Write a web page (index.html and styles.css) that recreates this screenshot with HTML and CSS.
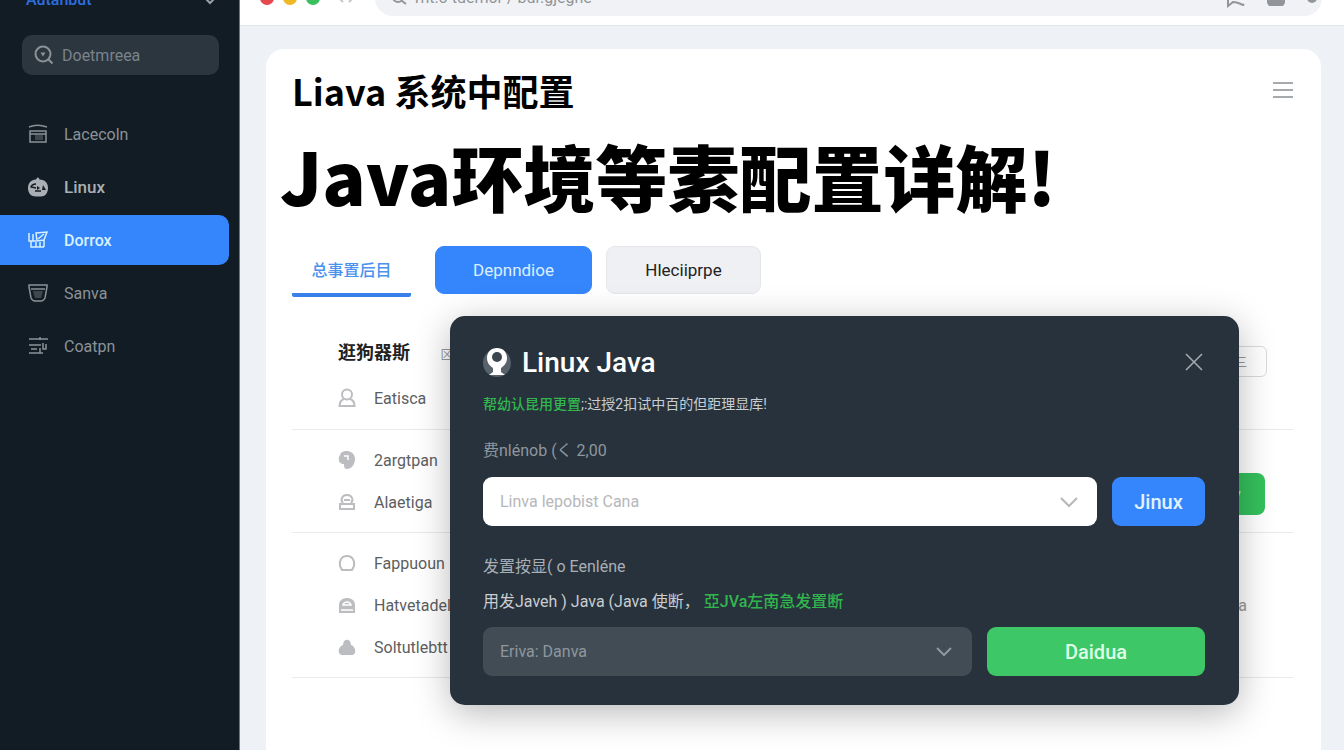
FILE: index.html
```html
<!doctype html>
<html lang="zh-CN">
<head>
	<meta charset="utf-8">
	<title>Java环境等素配置详解</title>
	<meta name="viewport" content="width=device-width, initial-scale=1">
	<link rel="stylesheet" href="styles.css">
</head>
<body>
	<div class="app">
		<aside class="sidebar">
			<div class="brand">
				<a href="#">Autanbut</a>
				<svg width="14" height="14" viewBox="0 0 14 14"><path d="M2 6l5 5 5-5"></path></svg>
			</div>
			<label class="search">
				<svg width="20" height="20" viewBox="0 0 20 20"><circle cx="9" cy="9" r="7.5"></circle><path d="M14.5 14.5l4 4"></path><path class="solid" d="M6.5 7.5h5L9 11.5z"></path></svg>
				<input type="text" placeholder="Doetmreea" aria-label="Doetmreea">
			</label>
			<nav class="nav">
				<a href="#">
					<svg width="20" height="20" viewBox="0 0 20 20"><path d="M1 3c5-2 12-2 18 0M2 7h16v11H2zM2 10h16"></path><path class="shade" d="M7 11h8v5H7z"></path></svg>
					Lacecoln
				</a>
				<a class="strong" href="#">
					<svg width="20" height="20" viewBox="0 0 20 20"><path class="solid" d="M9 1c1-1 2 0 2.500 1.500C17 2.500 20 6 20 11s-3 8.500-7 8.500H8C3 19.500 0 16 0 11s3-8 8-8.500z"></path><path class="cut" d="M8 7c-3 0-5 2-5 3l5 1M7 14h6"></path><path class="dark" d="M9 9l3 2-3 2zM15 8l3 5h-4z"></path></svg>
					Linux
				</a>
				<a class="active" href="#">
					<svg width="20" height="20" viewBox="0 0 20 20"><path d="M1 3v8h7M3 11v6h13M5 4v7M8 3l11-1-3 8-7 1zM10 9l6-5M8 12v5M12 12v5M16 10v7"></path></svg>
					Dorrox
				</a>
				<a href="#">
					<svg width="20" height="20" viewBox="0 0 20 20"><path d="M1 2h18v2l-2 11c-1 2-2 3-4 3H7c-2 0-3-1-4-3L1 4zM3 6h14"></path><path class="shade" d="M5 8h10l-2 7H7z"></path></svg>
					Sanva
				</a>
				<a href="#">
					<svg width="20" height="20" viewBox="0 0 20 20"><path d="M1 3h19M12 1v3M1 9h12M15 7v6h3V8M3 13h6M1 17h14M12 12v5"></path></svg>
					Coatpn
				</a>
			</nav>
		</aside>

		<div class="page">
			<header class="topbar">
				<span class="light red"></span>
				<span class="light yellow"></span>
				<span class="light green"></span>
				<svg class="arrows" width="18" height="12" viewBox="0 0 18 12"><path d="M6 2L2 6l4 4M12 2l4 4-4 4"></path></svg>
				<div class="address">
					<svg width="16" height="16" viewBox="0 0 16 16"><circle cx="7" cy="7" r="5"></circle><path d="M11 11l4 3"></path></svg>
					<input type="text" value="rnt.3 tdemor / bdr.gjegne" aria-label="rnt.3 tdemor">
					<svg width="20" height="20" viewBox="0 0 20 20"><path d="M2 2v16l5-4c4 0 6 1 10 3l1-1"></path></svg>
					<svg width="20" height="20" viewBox="0 0 20 20"><path class="solid" d="M1 3h18v12l-2 3H3l-2-3z"></path></svg>
					<svg width="12" height="12" viewBox="0 0 12 12"><circle class="solid" cx="6" cy="6" r="5"></circle></svg>
				</div>
			</header>

			<main class="card">
				<div class="card-head">
					<h2>Liava 系统中配置</h2>
					<button class="menu" aria-label="菜单">
						<svg width="20" height="18" viewBox="0 0 20 18"><path d="M0 2h20M0 9h20M0 16h20"></path></svg>
					</button>
				</div>
				<h1>Java环境等素配置详解!</h1>
				<div class="tabs">
					<button class="tab">总事置后目</button>
					<button class="pill primary">Depnndioe</button>
					<button class="pill">Hleciiprpe</button>
				</div>

				<section class="group first">
					<div class="rows">
						<h3>逛狗器斯 <small>区</small></h3>
						<div class="row">
							<svg width="18" height="20" viewBox="0 0 18 20"><circle cx="9" cy="6.500" r="5"></circle><path d="M6 11c-3 1-4.500 3-4.500 7h15c0-4-1.500-6-4.500-7"></path></svg>
							Eatisca
						</div>
					</div>
					<button class="outline">三</button>
				</section>
				<section class="group">
					<div class="rows">
						<div class="row">
							<svg width="18" height="20" viewBox="0 0 18 20"><path class="solid" d="M3 3c4-4 14-2 14 6 0 6-4 10-8 10-3 0-3-3-3-5C2 14 0 11 1 7z"></path><path class="cut" d="M6 6h4v4"></path></svg>
							2argtpan
						</div>
						<div class="row">
							<svg width="18" height="20" viewBox="0 0 18 20"><path d="M5 11C2 8 4 3 9 3s7 5 4 8M6 8h6M2 12h14v5H2z"></path></svg>
							Alaetiga
						</div>
					</div>
					<button class="go">y</button>
				</section>
				<section class="group">
					<div class="rows">
						<div class="row">
							<svg width="18" height="20" viewBox="0 0 18 20"><path d="M4 17L2 13C1 7 4 3 9 3s8 4 7 10l-2 4z"></path></svg>
							Fappuoun
						</div>
						<div class="row">
							<svg width="18" height="20" viewBox="0 0 18 20"><path class="solid" d="M1 18v-8c0-4 3-7 8-7s8 3 8 7v8z"></path><path class="cut" d="M5 10c1-4 7-4 8 0zM3 15h12"></path></svg>
							Hatvetadels
						</div>
						<div class="row">
							<svg width="18" height="20" viewBox="0 0 18 20"><path class="solid" d="M5 8c0-7 8-7 8 0 3 1 5 4 4 8l-2 2H3l-2-2c-1-4 1-7 4-8z"></path></svg>
							Soltutlebtt
						</div>
					</div>
					<span class="note">a</span>
				</section>

				<div class="modal" role="dialog" aria-labelledby="modal-title">
					<div class="modal-head">
						<svg width="28" height="30" viewBox="0 0 28 30"><circle class="halo" cx="14" cy="16" r="14"></circle><path class="pin" d="M14 1C8 1 4 5 4 11c0 5 3 8 6 10v4l-4 3h16l-4-3v-4c3-2 6-5 6-10 0-6-4-10-10-10z"></path><circle class="hole" cx="14" cy="10" r="5"></circle></svg>
						<h2 id="modal-title">Linux Java</h2>
						<button class="close" aria-label="关闭">
							<svg width="18" height="18" viewBox="0 0 18 18"><path d="M1 1l16 16M17 1L1 17"></path></svg>
						</button>
					</div>
					<p class="lead"><em>帮幼认昆用更置</em>;:过授2扣试中百的但距理显库!</p>
					<label class="field-label" for="version">费nlénob (く 2,00</label>
					<div class="field">
						<div class="select light-select">
							<select id="version"><option>Linva lepobist Cana</option></select>
							<svg width="20" height="12" viewBox="0 0 20 12"><path d="M2 2l8 8 8-8"></path></svg>
						</div>
						<button class="blue">Jinux</button>
					</div>
					<label class="field-label second" for="source">发置按显( o Eenléne</label>
					<p class="hint">用发Javeh ) Java (Java 使断， <em>亞JVa左南急发置断</em></p>
					<div class="field last">
						<div class="select dark-select">
							<select id="source"><option>Eriva: Danva</option></select>
							<svg width="20" height="12" viewBox="0 0 20 12"><path d="M3 2l7 7 7-7"></path></svg>
						</div>
						<button class="confirm">Daidua</button>
					</div>
				</div>
			</main>
		</div>
	</div>
</body>
</html>
```
FILE: styles.css
```css
* {
	box-sizing: border-box;
}
body {
	margin: 0;
	overflow: hidden;
	font-family: Roboto, "Noto Sans CJK SC", sans-serif;
	font-size: 16px;
	background-color: #eef1f6;
	color: #000;
}
h1, h2, h3, p {
	margin: 0;
}
button, input, select {
	font: inherit;
	color: inherit;
	border: 0;
	padding: 0;
	background: none;
}
a {
	color: inherit;
	text-decoration: none;
}
svg {
	flex: none;
	fill: none;
	stroke: currentColor;
	stroke-width: 2;
}
.solid {
	fill: currentColor;
	stroke: none;
}
em {
	font-style: normal;
	font-weight: 500;
	color: #31b64e;
}

/* the window is scrolled a little, so the top bar is partly out of view */
.app {
	display: flex;
	height: calc(100vh + 30px);
	margin-top: -30px;
}

.sidebar {
	flex: none;
	width: 240px;
	background-color: #121c24;
	border-right: 1px solid #6d747b;
	color: #8b9298;
}
.brand {
	display: flex;
	justify-content: space-between;
	align-items: center;
	height: 56px;
	padding: 2px 22px 0 26px;
	color: #2d6fe0;
	font-weight: 500;
}
.brand svg {
	color: #9aa0a6;
}
.search {
	display: flex;
	align-items: center;
	gap: 8px;
	height: 40px;
	margin: 9px 20px 34px 22px;
	padding: 0 12px;
	border-radius: 10px;
	background-color: #2c363f;
}
.search input {
	width: 100%;
	min-width: 0;
}
.search input::placeholder {
	color: #7a838b;
	opacity: 1;
}
.nav {
	display: flex;
	flex-direction: column;
	gap: 3px;
}
.nav a {
	display: flex;
	align-items: center;
	gap: 16px;
	height: 50px;
	margin-right: 10px;
	padding-left: 28px;
}
.nav svg {
	stroke-width: 1.5;
}
.nav .shade {
	fill: #3d474f;
	stroke: none;
}
.nav .strong {
	color: #a9afb4;
	font-size: 17px;
	font-weight: 500;
}
.nav .cut {
	stroke: #121c24;
}
.nav .dark {
	fill: #121c24;
	stroke: none;
}
.nav .active {
	border-radius: 0 10px 10px 0;
	background-color: #3586fd;
	color: #d8f1ff;
	font-weight: 500;
}

.page {
	flex: 1;
	display: flex;
	flex-direction: column;
	min-width: 0;
}
.topbar {
	display: flex;
	align-items: center;
	height: 56px;
	padding: 0 22px 0 20px;
	border-bottom: 1px solid #e3e6ea;
	background-color: #fff;
}
.light {
	width: 14px;
	height: 14px;
	margin-right: 9px;
	border-radius: 50%;
}
.red {
	background-color: #e5484d;
}
.yellow {
	background-color: #efb825;
}
.green {
	background-color: #38c05f;
}
.arrows {
	margin: 0 20px 0 8px;
	color: #c3c6ca;
}
.address {
	flex: 1;
	display: flex;
	align-items: center;
	gap: 20px;
	height: 36px;
	padding: 0 4px 0 16px;
	border-radius: 18px;
	background-color: #f1f2f6;
	color: #929599;
}
.address > svg:first-child {
	margin-right: -12px;
}
.address input {
	flex: 1;
	min-width: 0;
}

.card {
	position: relative;
	flex: 1;
	margin: 23px 23px 0 26px;
	padding: 18px 28px 0 26px;
	border-radius: 18px 18px 0 0;
	background-color: #fff;
}
.card-head {
	display: flex;
	justify-content: space-between;
	align-items: center;
	height: 46px;
}
.card-head h2 {
	font: bold 36px/46px "Noto Sans CJK SC", sans-serif;
}
.menu {
	display: flex;
	color: #8b8e92;
}
.menu svg {
	stroke-width: 1.5;
}
h1 {
	margin: 12px 0 0 -12px;
	font: 900 72px/100px "Noto Sans CJK SC", sans-serif;
	white-space: nowrap;
}
.tabs {
	display: flex;
	height: 52px;
	align-items: flex-start;
	margin-top: 21px;
}
.tab {
	width: 119px;
	height: 51px;
	margin-right: 24px;
	padding-bottom: 2px;
	border-bottom: 4px solid #3a80ea;
	border-radius: 2px;
	color: #4a92ee;
	font-weight: 500;
}
.pill {
	width: 155px;
	height: 48px;
	margin-right: 14px;
	border: 1px solid #e4e6ea;
	border-radius: 9px;
	background-color: #eff0f3;
	color: #222;
	font-size: 17px;
}
.primary {
	width: 157px;
	border-color: #3586fd;
	background-color: #3586fd;
	color: #dcefff;
}

.group {
	display: flex;
	justify-content: space-between;
	align-items: flex-end;
	padding: 9px 28px 9px 46px;
	border-bottom: 1px solid #e9eaec;
	color: #5c5e61;
}
.first {
	align-items: flex-start;
	padding: 38px 26px 10px 46px;
}
.group h3 {
	height: 41px;
	color: #222;
	font-size: 18px;
	line-height: 34px;
}
.group small {
	margin-left: 26px;
	color: #999;
	font-size: 12px;
	font-weight: normal;
}
.row {
	display: flex;
	align-items: center;
	gap: 18px;
	height: 42px;
}
.row svg {
	color: #bcbdc0;
}
.row .cut {
	stroke: #fff;
	stroke-width: 1.5;
}
.outline {
	width: 80px;
	height: 31px;
	margin-top: 10px;
	padding-left: 28px;
	border: 1px solid #d8dade;
	border-radius: 6px;
	background-color: #fff;
	color: #999;
	font-size: 12px;
}
.go {
	width: 90px;
	height: 42px;
	margin-bottom: 8px;
	padding-left: 34px;
	border-radius: 8px;
	background-color: #34c05c;
	color: #b5ecc4;
}
.note {
	align-self: center;
	margin-right: 18px;
	color: #999;
}

.modal {
	position: absolute;
	top: 267px;
	left: 184px;
	right: 82px;
	padding: 26px 34px 29px 33px;
	border-radius: 15px;
	background-color: #27323c;
	box-shadow: 0 8px 36px rgba(0, 0, 0, .28);
	color: #c9cdd1;
}
.modal-head {
	display: flex;
	align-items: center;
	gap: 11px;
	height: 40px;
}
.modal-head h2 {
	flex: 1;
	color: #fff;
	font-size: 28px;
	font-weight: 500;
}
.halo {
	fill: #58626b;
	stroke: none;
}
.pin {
	fill: #fff;
	stroke: none;
}
.hole {
	fill: #3b4650;
	stroke: none;
}
.close {
	display: flex;
	margin-right: 2px;
	color: #a7adb2;
}
.close svg {
	stroke-width: 1.5;
}
.modal p, .field-label {
	display: block;
	line-height: 24px;
	white-space: nowrap;
}
.modal .lead {
	margin-top: 10px;
	font-size: 14px;
}
.field-label {
	margin-top: 23px;
	color: #8f979e;
}
.second {
	margin-top: 29px;
	color: #a9afb5;
}
.hint {
	margin-top: 11px;
}
.field {
	display: flex;
	gap: 15px;
	margin-top: 14px;
}
.last {
	margin-top: 13px;
}
.select {
	flex: 1;
	display: grid;
	align-items: center;
	height: 49px;
	border-radius: 9px;
}
.select select {
	grid-area: 1 / 1;
	width: 100%;
	height: 100%;
	padding: 0 44px 0 17px;
	appearance: none;
}
.select svg {
	grid-area: 1 / 1;
	justify-self: end;
	margin-right: 18px;
	pointer-events: none;
}
.light-select {
	background-color: #fff;
	color: #b5b7ba;
}
.dark-select {
	background-color: #424c55;
	color: #8f979e;
}
.field button {
	height: 49px;
	border-radius: 9px;
	font-size: 20px;
	font-weight: 500;
}
.field .blue {
	width: 93px;
	background-color: #3586fd;
	color: #e2f2ff;
}
.field .confirm {
	width: 218px;
	background-color: #3dc766;
	color: #dcffe6;
}
```
